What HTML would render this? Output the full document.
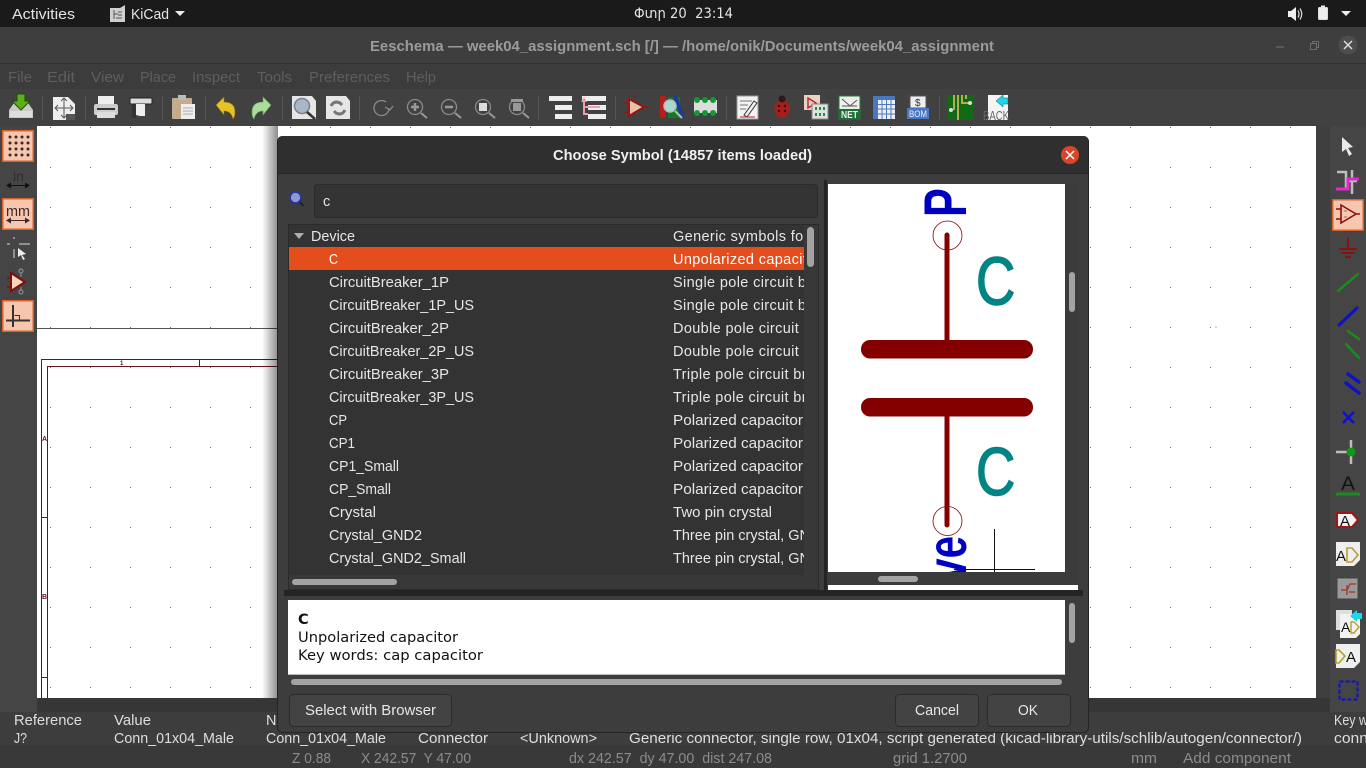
<!DOCTYPE html>
<html><head><meta charset="utf-8"><title>Eeschema</title>
<style>
html,body{margin:0;padding:0;background:#3d3d3d;overflow:hidden}
svg{display:block;position:absolute;left:0;top:0}
text{font-family:"Liberation Sans","DejaVu Sans","Noto Sans CJK JP",sans-serif;font-size:14.5px;white-space:pre}
.m{fill:#5e5e5e}.d{fill:#e6e6e6}.s{fill:#8c8c8c}.p{fill:#dedede}
.l{letter-spacing:.36px}
.v{font-family:"DejaVu Sans",sans-serif;fill:#111;font-size:14.5px}
</style></head><body>
<svg width="1366" height="768" viewBox="0 0 1366 768" xmlns="http://www.w3.org/2000/svg">
<defs>
<pattern id="g" x="10" y="7" width="40" height="40" patternUnits="userSpaceOnUse"><rect x="0" y="0" width="1" height="1" fill="#777"/></pattern>
<linearGradient id="sh" x1="0" x2="1" y1="0" y2="0"><stop offset="0" stop-color="#000" stop-opacity="0"/><stop offset="1" stop-color="#000" stop-opacity=".45"/></linearGradient>
<clipPath id="c1"><rect x="289" y="224" width="515" height="351"/></clipPath>
<clipPath id="c2"><rect x="828" y="184" width="237" height="388"/></clipPath>
<clipPath id="c3"><rect x="37" y="126" width="1279" height="572"/></clipPath>
</defs>

<!-- base -->
<rect width="1366" height="768" fill="#3d3d3d"/>
<rect width="1366" height="27" fill="#1a1a1a"/>
<rect y="27" width="1366" height="36" fill="#3e3e3e"/>
<rect y="63" width="1366" height="1" fill="#333"/>
<rect y="64" width="1366" height="26" fill="#3c3c3c"/>
<rect y="89" width="1366" height="37" fill="#414141"/>

<!-- top bar -->
<text x="12" y="19" fill="#e4e4e4" textLength="63" lengthAdjust="spacingAndGlyphs">Activities</text>
<g transform="translate(110,5)"><path d="M0 3h10l5 -3v17H0z" fill="#cfcfcf"/><path d="M4 5v9M8 7h4M8 10h4M4 9h4M6 13h6" stroke="#555" fill="none"/></g>
<text x="131" y="19" fill="#e4e4e4" textLength="38" lengthAdjust="spacingAndGlyphs">KiCad</text>
<path d="M175 11h10l-5 5z" fill="#eee"/>
<text x="634" y="18" fill="#e4e4e4" style="font-size:14px;font-family:'DejaVu Sans','Liberation Sans',sans-serif" textLength="99" lengthAdjust="spacingAndGlyphs">Փտր 20  23:14</text>
<g transform="translate(1288,7)"><path d="M0 4h3l5-4v14l-5-4H0z" fill="#eee"/><path d="M10 3.500q2 3.500 0 7M12 1.500q3.500 5.500 0 11" stroke="#ddd" stroke-width="1.200" fill="none"/></g>
<rect x="1318.500" y="7.500" width="9" height="12" rx="1" fill="#eee" stroke="#ddd"/><rect x="1321" y="5.500" width="4" height="2" fill="#eee"/>
<path d="M1341 11h10l-5 5z" fill="#eee"/>

<!-- title -->
<text x="370" y="51" fill="#9b9b9b" style="font-weight:bold" textLength="624" lengthAdjust="spacingAndGlyphs">Eeschema — week04_assignment.sch [/] — /home/onik/Documents/week04_assignment</text>
<path d="M1276 47h8" stroke="#777" stroke-width="1"/>
<path d="M1310.500 43.500h6v6h-6zM1312.500 43.500v-2h6v6h-2" stroke="#6e6e6e" fill="none"/>
<circle cx="1348" cy="45" r="9.500" fill="#4d4d4d"/><path d="M1344 41l8 8M1352 41l-8 8" stroke="#ddd" stroke-width="1.500"/>

<!-- menu -->
<text class="m" x="8" y="82" textLength="24" lengthAdjust="spacingAndGlyphs">File</text>
<text class="m" x="47" y="82" textLength="28" lengthAdjust="spacingAndGlyphs">Edit</text>
<text class="m" x="91" y="82" textLength="33" lengthAdjust="spacingAndGlyphs">View</text>
<text class="m" x="140" y="82" textLength="36" lengthAdjust="spacingAndGlyphs">Place</text>
<text class="m" x="192" y="82" textLength="48" lengthAdjust="spacingAndGlyphs">Inspect</text>
<text class="m" x="257" y="82" textLength="35" lengthAdjust="spacingAndGlyphs">Tools</text>
<text class="m" x="309" y="82" textLength="81" lengthAdjust="spacingAndGlyphs">Preferences</text>
<text class="m" x="406" y="82" textLength="30" lengthAdjust="spacingAndGlyphs">Help</text>

<!-- toolbar separators -->
<g stroke="#555"><path d="M42.500 96v24M85.500 96v24M162.500 96v24M205.500 96v24M282.500 96v24M359.500 96v24M538.500 96v24M615.500 96v24M726.500 96v24M939.500 96v24"/></g>

<!-- save -->
<path d="M9 110l5-7h14l5 7v8H9z" fill="#c9c9c9"/><rect x="10" y="111" width="22" height="6" fill="#dedede"/>
<path d="M17 94h8v7h5l-9 9-9-9h5z" fill="#5cb015" stroke="#1d4d0a"/>
<!-- page settings -->
<path d="M53 97h15l7 7v16H53z" fill="#eee"/><path d="M64 99v18M56 108h16M61 101l3-3 3 3M61 115l3 3 3-3M58 105l-3 3 3 3M70 105l3 3-3 3" stroke="#555" fill="none"/><rect x="66" y="114" width="9" height="6" fill="#555"/>
<!-- print -->
<rect x="98" y="96" width="16" height="9" fill="#eee"/><rect x="94" y="104" width="24" height="11" rx="2" fill="#ccc"/><rect x="97" y="108" width="18" height="2" fill="#333"/><rect x="97" y="112" width="18" height="6" fill="#ddd"/>
<!-- plot -->
<rect x="130" y="98" width="22" height="6" rx="1" fill="#ddd" stroke="#222"/><path d="M136 104h9v12h-5l-4-1z" fill="#eee"/><path d="M132 104h4v14h-4z" fill="#333"/>
<!-- paste -->
<rect x="172" y="98" width="20" height="21" rx="1" fill="#c4ad8d"/><rect x="178" y="95" width="8" height="5" fill="#bbb"/><rect x="181" y="104" width="14" height="15" fill="#eee"/><path d="M183 108h10M183 111h10M183 114h10" stroke="#aaa"/>
<!-- undo / redo -->
<path d="M216 105l8-8v5q11 0 11 10 0 5-2 7-2-8-9-8v4z" fill="#e6c229" stroke="#8a7310" stroke-width=".6"/>
<path d="M271 105l-8-8v5q-11 0-11 10 0 5 2 7 2-8 9-8v4z" fill="#a9dd9c" stroke="#6a9a60" stroke-width=".6"/>
<!-- find docs -->
<path d="M292 96h20l4 5v18h-24z" fill="#e6e6e6"/><circle cx="302" cy="106" r="7.500" fill="#a9b6c8" stroke="#7a8090" stroke-width="1.500"/><path d="M307 112l8 7" stroke="#333" stroke-width="2.500"/>
<path d="M326 96h20l4 5v18h-24z" fill="#e6e6e6"/><path d="M331 106q3-6 9-3l2 2M345 110q-3 6-9 3l-2-2" stroke="#777" stroke-width="3" fill="none"/>
<!-- zoom group -->
<g fill="none" stroke="#8a8a8a" stroke-width="1.300"><path d="M386 102a7.500 7.500 0 1 0 3 6"/><path d="M385 107l5 3 3-4"/>
<circle cx="415" cy="107" r="7.500"/><circle cx="449" cy="107" r="7.500"/><circle cx="483" cy="107" r="7.500"/><circle cx="517" cy="107" r="7.500"/>
<path d="M421 113l6 5M455 113l6 5M489 113l6 5M523 113l6 5" stroke="#999" stroke-width="2"/></g>
<path d="M411 107h8M415 103v8" stroke="#999" stroke-width="2.500"/><path d="M445 107h8" stroke="#999" stroke-width="2.500"/>
<rect x="479" y="103" width="8" height="8" fill="#ddd"/><path d="M511 99h12v3h-12z" fill="#999"/><rect x="513" y="103" width="8" height="8" fill="#999"/>
<!-- hierarchy -->
<g fill="#eee"><rect x="549" y="96" width="23" height="5"/><rect x="555" y="105" width="17" height="5"/><rect x="555" y="114" width="17" height="5"/>
<rect x="582" y="96" width="24" height="5"/><rect x="588" y="105" width="18" height="5"/><rect x="588" y="114" width="18" height="5"/></g>
<path d="M584 101v13h4M584 107h16" stroke="#e9a0a8" stroke-width="2" fill="none"/><path d="M584 97l-3 5h6z" fill="#e9a0a8"/>
<!-- opamp -->
<path d="M629 99l15 8-15 9z" fill="#e8c0a8" stroke="#921616" stroke-width="2"/><path d="M624 103h5M624 112h5M645 107h4M635 94v4" stroke="#921616" stroke-width="1.500"/>
<!-- lib browser -->
<rect x="660" y="96" width="6" height="22" fill="#b81c1c"/><rect x="668" y="97" width="12" height="21" fill="#137a20"/><path d="M677 96l8 22-4 0-8-22z" fill="#1c3a9c"/>
<circle cx="670" cy="106" r="6" fill="#a8d8d0" stroke="#bbb" stroke-width="1.500"/><path d="M675 111l7 7" stroke="#bbb" stroke-width="2"/>
<!-- footprint -->
<rect x="694" y="100" width="23" height="13" fill="#ddd"/>
<g fill="#129a38"><circle cx="697" cy="100" r="3"/><circle cx="705" cy="100" r="3"/><circle cx="713" cy="100" r="3"/><circle cx="697" cy="113" r="3"/><circle cx="705" cy="113" r="3"/><circle cx="713" cy="113" r="3"/></g>
<!-- annotate -->
<rect x="737" y="96" width="21" height="23" fill="#f2f2f2" stroke="#999"/><path d="M740 101h12M740 105h8M740 109h6" stroke="#777"/><path d="M744 115l10-14 3 2-10 14z" fill="#eee" stroke="#333"/><path d="M740 117h15" stroke="#b22" />
<!-- bug -->
<ellipse cx="782" cy="109" rx="7.500" ry="9" fill="#a81e1e"/><circle cx="782" cy="99" r="3.500" fill="#2a1a1a"/><g fill="#3a0a0a"><circle cx="779" cy="106" r="1.200"/><circle cx="785" cy="106" r="1.200"/><circle cx="779" cy="111" r="1.200"/><circle cx="785" cy="111" r="1.200"/></g>
<!-- assign -->
<rect x="804" y="95" width="16" height="15" fill="#e6d2c6"/><path d="M808 98l8 5-8 5z" fill="none" stroke="#b22" stroke-width="1.400"/>
<rect x="812" y="104" width="16" height="15" fill="#e0e0e0" stroke="#888"/><g fill="#129a38"><rect x="815" y="107" width="2" height="3"/><rect x="819" y="107" width="2" height="3"/><rect x="823" y="107" width="2" height="3"/><rect x="815" y="113" width="2" height="3"/><rect x="819" y="113" width="2" height="3"/><rect x="823" y="113" width="2" height="3"/></g>
<!-- NET -->
<rect x="839" y="96" width="21" height="23" fill="#eee" stroke="#1f7a3a"/><path d="M842 99l8 7 7-6M842 106l8 0 7 0" stroke="#555" fill="none"/><rect x="839" y="109" width="21" height="10" fill="#1f6e35"/>
<text x="841" y="118" style="font-size:10px;font-weight:bold" fill="#eee" textLength="17" lengthAdjust="spacingAndGlyphs">NET</text>
<!-- table -->
<rect x="873" y="96" width="22" height="23" fill="#eee"/><path d="M873 96h22v4h-22zM873 96h4v23h-4z" fill="#4a78c0"/><path d="M877.500 100v19M882 100v19M886.500 100v19M891 100v19M873 104.500h22M873 109h22M873 114h22" stroke="#4a78c0"/>
<!-- BOM -->
<rect x="910" y="96" width="16" height="12" fill="#eee" stroke="#555"/><text x="915" y="106" style="font-size:10px" fill="#333">$</text><rect x="907" y="108" width="22" height="11" fill="#4a78c8"/>
<text x="909" y="117" style="font-size:9.500px" fill="#eee" textLength="18" lengthAdjust="spacingAndGlyphs">BOM</text>
<!-- PCB -->
<rect x="948" y="95" width="26" height="25" fill="#0f6a12"/><path d="M954 95v15M958 95v25M962 95v8l8 0M966 95v4" stroke="#b8a85a" stroke-width="2" fill="none"/><circle cx="951" cy="110" r="2" fill="#ddd"/><circle cx="970" cy="103" r="2" fill="#ddd"/>
<!-- back -->
<path d="M988 95h20v25h-20z" fill="#f4f4f4"/><path d="M996 101l7-6v3h5v6h-5v3z" fill="#1fd5e8" stroke="#0a5f6a" stroke-width=".5"/>
<text x="983" y="120" style="font-size:13px" fill="#666" textLength="26" lengthAdjust="spacingAndGlyphs">BACK</text>

<!-- canvas -->
<rect x="37" y="126" width="1279" height="572" fill="#fff"/>
<rect x="37" y="126" width="1279" height="572" fill="url(#g)"/>
<g clip-path="url(#c3)">
<path d="M37 328.500H278" stroke="#555" stroke-width="1"/>
<path d="M41.500 698V359.500H278M47.500 698V366.500H278M199.500 360v6M41 517.500h6M41 677.500h6" stroke="#6a1020" fill="none"/>
<text x="120" y="365" style="font-size:6px;font-weight:bold" fill="#6a1020">1</text>
<text x="42" y="441" style="font-size:7px;font-weight:bold" fill="#6a1020">A</text>
<text x="42" y="599" style="font-size:7px;font-weight:bold" fill="#6a1020">B</text>
</g>
<rect x="1215.500" y="326.500" width="1" height="1" fill="#555"/>
<rect x="1316" y="126" width="14" height="586" fill="#3f3f3f"/>
<rect x="37" y="698" width="1293" height="14" fill="#363636"/>

<!-- left toolbar -->
<rect x="0" y="126" width="37" height="586" fill="#454545"/>
<g fill="#f6c6ae" stroke="#d8622c" stroke-width="1.500">
<rect x="2.750" y="130.750" width="30.500" height="30.500"/><rect x="2.750" y="198.750" width="30.500" height="30.500"/><rect x="2.750" y="300.750" width="30.500" height="30.500"/></g>
<g fill="#3c2a2a"><circle cx="10" cy="137" r="1.500"/><circle cx="16" cy="137" r="1.500"/><circle cx="22" cy="137" r="1.500"/><circle cx="28" cy="137" r="1.500"/><circle cx="10" cy="143" r="1.500"/><circle cx="16" cy="143" r="1.500"/><circle cx="22" cy="143" r="1.500"/><circle cx="28" cy="143" r="1.500"/><circle cx="10" cy="149" r="1.500"/><circle cx="16" cy="149" r="1.500"/><circle cx="22" cy="149" r="1.500"/><circle cx="28" cy="149" r="1.500"/><circle cx="10" cy="155" r="1.500"/><circle cx="16" cy="155" r="1.500"/><circle cx="22" cy="155" r="1.500"/><circle cx="28" cy="155" r="1.500"/></g>
<text x="13" y="181" style="font-size:14px" fill="#2f2f2f" textLength="11" lengthAdjust="spacingAndGlyphs">in</text>
<path d="M9 185.500h20" stroke="#111"/><path d="M6 185.500l5-3v6zM30 185.500l-5-3v6z" fill="#111"/>
<text x="6" y="216" style="font-size:15px" fill="#3c2a2a" textLength="24" lengthAdjust="spacingAndGlyphs">mm</text>
<path d="M9 220.500h20" stroke="#3c2a2a"/><path d="M6 220.500l5-3v6zM30 220.500l-5-3v6z" fill="#3c2a2a"/>
<path d="M14 237v2M7 244h3M19 244h11M14 249v9" stroke="#aaa" stroke-width="1.500"/><path d="M18 248l8 6-4 1 3 4-2 1-2-5-3 2z" fill="#eee"/>
<path d="M11 273l14 9-14 9z" fill="#f5d6ba" stroke="#7a1010" stroke-width="2"/><path d="M7 278h4M7 287h4" stroke="#7a1010" stroke-width="1.500"/><circle cx="21" cy="271" r="2" fill="none" stroke="#999"/><circle cx="21" cy="292" r="2" fill="none" stroke="#999"/><path d="M21 273v4M21 287v3" stroke="#999"/>
<path d="M13 305v22M6 320.500h24" stroke="#333" stroke-width="2"/><path d="M14.500 315.500h5v4" stroke="#333" fill="none"/>

<!-- right toolbar -->
<rect x="1330" y="126" width="36" height="586" fill="#454545"/>
<path d="M1342 137l11 10-5 1 4 6-3 2-3-7-4 3z" fill="#eaeaea"/>
<path d="M1337 172h9v18M1352 170v24M1345 181h12" stroke="#bdbdbd" stroke-width="2.500" fill="none"/><path d="M1336 189h12v-10h11" stroke="#e428d0" stroke-width="3" fill="none"/>
<rect x="1332.750" y="199.750" width="30.500" height="30.500" fill="#f6c6ae" stroke="#d8622c" stroke-width="1.500"/>
<path d="M1341 205l15 9-15 9z" fill="none" stroke="#8c1010" stroke-width="1.600"/><path d="M1336 209h5M1336 219h5M1356 214h4" stroke="#8c1010" stroke-width="1.400"/><path d="M1344 211h3M1344 217h3" stroke="#b06a4a"/>
<path d="M1348 238v10M1339 249h18M1342 253h12M1345 257h6" stroke="#8c1010" stroke-width="2" fill="none"/>
<path d="M1338 291l20-17" stroke="#1c8a1c" stroke-width="2.500" stroke-linecap="round"/>
<path d="M1339 325l18-17" stroke="#1010c8" stroke-width="3" stroke-linecap="round"/>
<path d="M1348 331l11 8M1346 344l13 14" stroke="#1c8a1c" stroke-width="2.500" stroke-linecap="round" fill="none"/>
<path d="M1348 374l11 8M1346 383l13 10" stroke="#1010c8" stroke-width="3.500" stroke-linecap="round"/>
<path d="M1343 412l11 11M1354 412l-11 11" stroke="#1010c8" stroke-width="2.500"/>
<path d="M1336 452h12M1351 440v24" stroke="#bdbdbd" stroke-width="2.500"/><circle cx="1351" cy="452" r="4.500" fill="#0f9a15"/>
<text x="1341" y="490" style="font-size:19px" fill="#111" textLength="14" lengthAdjust="spacingAndGlyphs">A</text><path d="M1336 494h24" stroke="#1c8a1c" stroke-width="3"/>
<path d="M1337 513h15l6 7-6 7h-15z" fill="#f2f2f2" stroke="#9c1818" stroke-width="2"/><text x="1340" y="526" style="font-size:15px" fill="#111">A</text>
<path d="M1336 542h24v18l-6 6h-18z" fill="#efefef"/><text x="1336" y="561" style="font-size:15px" fill="#111">A</text><path d="M1347 548h5l6 7-6 7h-5z" fill="#efefef" stroke="#b8a030" stroke-width="1.600"/>
<rect x="1337" y="578" width="21" height="21" fill="#9a9a9a" stroke="#444"/><path d="M1341 590h6l3-6h6M1349 592h6M1347 585v10" stroke="#a8301f" stroke-width="1.300" fill="none"/>
<path d="M1336 610h16v20h-16z" fill="#ddd"/><path d="M1340 614h20v20l-4 4h-16z" fill="#f2f2f2"/><text x="1341" y="632" style="font-size:14px" fill="#111">A</text><path d="M1351 622h3l5 5-5 6h-3z" fill="none" stroke="#b8a030" stroke-width="1.400"/><path d="M1350 616l7-6v3h5v6h-5v3z" fill="#1fd5e8"/>
<path d="M1336 644h24v18l-6 6h-18z" fill="#efefef"/><path d="M1336 650h3l6 6-6 7h-3z" fill="#efefef" stroke="#b8a030" stroke-width="1.600"/><text x="1346" y="662" style="font-size:15px" fill="#111">A</text>
<rect x="1339.500" y="681.500" width="18" height="18" fill="none" stroke="#1010c8" stroke-width="2" stroke-dasharray="4 2"/>

<!-- message panel -->
<rect y="745" width="1366" height="23" fill="#393939"/>
<text class="p" x="14" y="725" textLength="68" lengthAdjust="spacingAndGlyphs">Reference</text>
<text class="p" x="14" y="743" textLength="13" lengthAdjust="spacingAndGlyphs">J?</text>
<text class="p" x="114" y="725" textLength="37" lengthAdjust="spacingAndGlyphs">Value</text>
<text class="p" x="114" y="743" textLength="120" lengthAdjust="spacingAndGlyphs">Conn_01x04_Male</text>
<text class="p" x="266" y="725">N</text>
<text class="p" x="266" y="743" textLength="120" lengthAdjust="spacingAndGlyphs">Conn_01x04_Male</text>
<text class="p" x="418" y="743" textLength="70" lengthAdjust="spacingAndGlyphs">Connector</text>
<text class="p" x="520" y="743" textLength="77" lengthAdjust="spacingAndGlyphs">&lt;Unknown&gt;</text>
<text class="p" x="629" y="743" textLength="673" lengthAdjust="spacingAndGlyphs">Generic connector, single row, 01x04, script generated (kicad-library-utils/schlib/autogen/connector/)</text>
<text class="p" x="1334" y="725" textLength="34" lengthAdjust="spacingAndGlyphs">Key w</text>
<text class="p" x="1334" y="743" textLength="34" lengthAdjust="spacingAndGlyphs">conn</text>
<text class="s" x="292" y="763" textLength="39" lengthAdjust="spacingAndGlyphs">Z 0.88</text>
<text class="s" x="361" y="763" textLength="110" lengthAdjust="spacingAndGlyphs">X 242.57  Y 47.00</text>
<text class="s" x="569" y="763" textLength="203" lengthAdjust="spacingAndGlyphs">dx 242.57  dy 47.00  dist 247.08</text>
<text class="s" x="893" y="763" textLength="74" lengthAdjust="spacingAndGlyphs">grid 1.2700</text>
<text class="s" x="1131" y="763" textLength="26" lengthAdjust="spacingAndGlyphs">mm</text>
<text class="s" x="1183" y="763" textLength="108" lengthAdjust="spacingAndGlyphs">Add component</text>

<!-- dialog shadow -->
<rect x="262" y="126" width="16" height="572" fill="url(#sh)"/>

<!-- dialog -->
<rect x="277.500" y="136.500" width="811" height="596" rx="5" fill="#3d3d3d" stroke="#242424"/>
<path d="M278 173v-32a5 5 0 0 1 5-5h800a5 5 0 0 1 5 5v32z" fill="#2f2f2f"/>
<rect x="278" y="173" width="810" height="1" fill="#262626"/>
<text x="553" y="160" fill="#f0f0f0" style="font-weight:bold" textLength="259" lengthAdjust="spacingAndGlyphs">Choose Symbol (14857 items loaded)</text>
<circle cx="1070" cy="155" r="9" fill="#d9452b"/><path d="M1066 151l8 8M1074 151l-8 8" stroke="#fff" stroke-width="1.500"/>

<!-- search -->
<circle cx="295.500" cy="197.500" r="5.500" fill="#8d9ad8" stroke="#2c3596" stroke-width="1.800"/><path d="M299.500 202l4 4" stroke="#222" stroke-width="2"/>
<rect x="314.500" y="184.500" width="503" height="33" rx="3" fill="#333" stroke="#2a2a2a"/>
<text class="d" x="323" y="206">c</text>

<!-- tree -->
<rect x="288.500" y="224.500" width="530" height="365" fill="#333" stroke="#2a2a2a"/>
<rect x="289" y="247" width="515" height="23" fill="#e34e1c"/>
<path d="M294 233h10l-5 6z" fill="#b0b0b0"/>
<g clip-path="url(#c1)">
<text class="d" x="311" y="241" textLength="44" lengthAdjust="spacingAndGlyphs">Device</text>
<text x="329" y="264" fill="#fff" textLength="9" lengthAdjust="spacingAndGlyphs">C</text>
<text class="d" x="329" y="287" textLength="120" lengthAdjust="spacingAndGlyphs">CircuitBreaker_1P</text>
<text class="d" x="329" y="310" textLength="145" lengthAdjust="spacingAndGlyphs">CircuitBreaker_1P_US</text>
<text class="d" x="329" y="333" textLength="120" lengthAdjust="spacingAndGlyphs">CircuitBreaker_2P</text>
<text class="d" x="329" y="356" textLength="145" lengthAdjust="spacingAndGlyphs">CircuitBreaker_2P_US</text>
<text class="d" x="329" y="379" textLength="120" lengthAdjust="spacingAndGlyphs">CircuitBreaker_3P</text>
<text class="d" x="329" y="402" textLength="145" lengthAdjust="spacingAndGlyphs">CircuitBreaker_3P_US</text>
<text class="d" x="329" y="425" textLength="18" lengthAdjust="spacingAndGlyphs">CP</text>
<text class="d" x="329" y="448" textLength="26" lengthAdjust="spacingAndGlyphs">CP1</text>
<text class="d" x="329" y="471" textLength="70" lengthAdjust="spacingAndGlyphs">CP1_Small</text>
<text class="d" x="329" y="494" textLength="62" lengthAdjust="spacingAndGlyphs">CP_Small</text>
<text class="d" x="329" y="517" textLength="47" lengthAdjust="spacingAndGlyphs">Crystal</text>
<text class="d" x="329" y="540" textLength="93" lengthAdjust="spacingAndGlyphs">Crystal_GND2</text>
<text class="d" x="329" y="563" textLength="137" lengthAdjust="spacingAndGlyphs">Crystal_GND2_Small</text>
<text class="d l" x="673" y="241">Generic symbols for common devices</text>
<text class="l" x="673" y="264" fill="#fff">Unpolarized capacitor</text>
<text class="d l" x="673" y="287">Single pole circuit breaker</text>
<text class="d l" x="673" y="310">Single pole circuit breaker</text>
<text class="d l" x="673" y="333">Double pole circuit breaker</text>
<text class="d l" x="673" y="356">Double pole circuit breaker</text>
<text class="d l" x="673" y="379">Triple pole circuit breaker</text>
<text class="d l" x="673" y="402">Triple pole circuit breaker</text>
<text class="d" x="673" y="425" textLength="130" lengthAdjust="spacingAndGlyphs">Polarized capacitor</text>
<text class="d" x="673" y="448" textLength="130" lengthAdjust="spacingAndGlyphs">Polarized capacitor</text>
<text class="d" x="673" y="471" textLength="130" lengthAdjust="spacingAndGlyphs">Polarized capacitor</text>
<text class="d" x="673" y="494" textLength="130" lengthAdjust="spacingAndGlyphs">Polarized capacitor</text>
<text class="d" x="673" y="517" textLength="99" lengthAdjust="spacingAndGlyphs">Two pin crystal</text>
<text class="d" x="673" y="540">Three pin crystal, GND on pins</text>
<text class="d" x="673" y="563">Three pin crystal, GND on pins</text>
</g>
<rect x="804" y="225" width="14" height="364" fill="#383838"/>
<rect x="807" y="227" width="7" height="40" rx="3.500" fill="#a3a3a3"/>
<rect x="289" y="575" width="529" height="14" fill="#383838"/>
<rect x="292" y="579" width="105" height="6" rx="3" fill="#a3a3a3"/>

<!-- sash -->
<rect x="824" y="180" width="3" height="410" fill="#242424"/>

<!-- preview -->
<rect x="828" y="184" width="237" height="388" fill="#fff"/>
<g clip-path="url(#c2)">
<text transform="translate(966,217) rotate(-90) scale(.72,1)" style="font-size:60px;font-weight:bold" fill="#0000c2">P</text>
<text transform="translate(966,536) rotate(-90) scale(.72,1)" text-anchor="end" style="font-size:56px;font-weight:bold" fill="#0000c2">ve</text>
<text transform="translate(976,304.500) scale(.8,1)" style="font-size:68px" fill="#008484" stroke="#008484" stroke-width="1.500">C</text>
<text transform="translate(976,495) scale(.8,1)" style="font-size:68px" fill="#008484" stroke="#008484" stroke-width="1.500">C</text>
<path d="M947 235V345M947 415V525" stroke="#840000" stroke-width="5" stroke-linecap="round"/>
<rect x="861" y="340" width="172" height="18.500" rx="9" fill="#840000"/>
<rect x="861" y="398" width="172" height="18.500" rx="9" fill="#840000"/>
<circle cx="947.500" cy="235.500" r="14.500" fill="none" stroke="#840000" stroke-width=".8"/>
<circle cx="947.500" cy="521" r="14.500" fill="none" stroke="#840000" stroke-width=".8"/>
<path d="M994.500 529V572M954 569.500H1035" stroke="#111" stroke-width="1"/>
</g>
<rect x="1065" y="184" width="13" height="388" fill="#3b3b3b"/>
<rect x="1069" y="272" width="6" height="40" rx="3" fill="#a3a3a3"/>
<rect x="828" y="572" width="250" height="13" fill="#3b3b3b"/>
<rect x="878" y="576" width="40" height="6" rx="3" fill="#a3a3a3"/>
<rect x="828" y="585" width="250" height="5" fill="#fff"/>
<rect x="284" y="590" width="799" height="6" fill="#242424"/>

<!-- details -->
<rect x="288" y="600" width="777" height="75" fill="#fff"/><rect x="288" y="674" width="777" height="1" fill="#bbb"/>
<text class="v" x="298" y="624" style="font-weight:bold">C</text>
<text class="v" x="298" y="642" textLength="160" lengthAdjust="spacingAndGlyphs">Unpolarized capacitor</text>
<text class="v" x="298" y="660" textLength="185" lengthAdjust="spacingAndGlyphs">Key words: cap capacitor</text>
<rect x="1069" y="603" width="6" height="40" rx="3" fill="#a3a3a3"/>
<rect x="291" y="679" width="771" height="6" rx="3" fill="#a3a3a3"/>

<!-- buttons -->
<g fill="#434343" stroke="#2a2a2a"><rect x="289.500" y="694.500" width="162" height="32" rx="4"/><rect x="895.500" y="694.500" width="83" height="32" rx="4"/><rect x="987.500" y="694.500" width="83" height="32" rx="4"/></g>
<text class="d" x="305" y="715" textLength="131" lengthAdjust="spacingAndGlyphs">Select with Browser</text>
<text class="d" x="915" y="715" textLength="44" lengthAdjust="spacingAndGlyphs">Cancel</text>
<text class="d" x="1018" y="715" textLength="20" lengthAdjust="spacingAndGlyphs">OK</text>
</svg>
</body></html>
